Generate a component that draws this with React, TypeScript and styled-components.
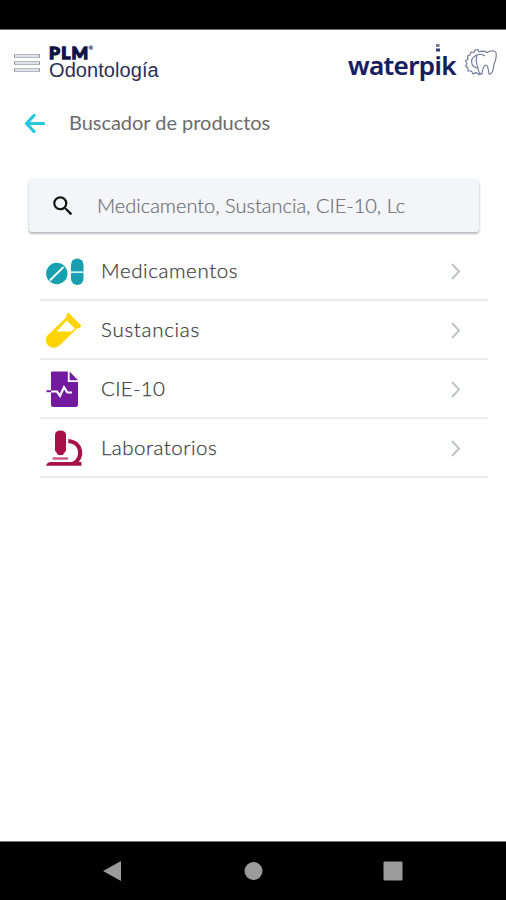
import React from 'react';
import styled, { createGlobalStyle } from 'styled-components';
import { MdSearch } from 'react-icons/md';

const GlobalStyle = createGlobalStyle`
  * { box-sizing: border-box; }
  body { margin: 0; background: #fff; font-family: Lato, "Liberation Sans", sans-serif; }
  svg { display: block; flex: none; }
`;

const Screen = styled.div`
  display: flex;
  flex-direction: column;
  width: 506px;
  height: 900px;
  overflow: hidden;
  background: #fff;
`;

const StatusBar = styled.div`
  height: 30px;
  flex: none;
  background: #000;
  border-bottom: 1px solid #707070;
`;

const Header = styled.header`
  display: flex;
  height: 65px;
  flex: none;
  padding-left: 14px;
`;

const MenuButton = styled.div`
  display: flex;
  flex-direction: column;
  gap: 3px;
  width: 26px;
  padding-top: 24px;
`;

const MenuLine = styled.span`
  height: 4px;
  border: 1px solid #b4b8bf;
  border-left-color: #8b9099;
  border-right-color: #8b9099;
  border-radius: 1px;
  background: #e0e2e7;
`;

const Brand = styled.div`
  display: flex;
  flex-direction: column;
  width: 130px;
  margin-left: 9px;
  padding-top: 15px;
  color: #10134a;
  white-space: nowrap;
`;

const BrandName = styled.div`
  display: flex;
  height: 15px;
  font: 900 17.5px/16px Lato, sans-serif;
  letter-spacing: 1.2px;
  -webkit-text-stroke: 1.3px #10134a;
`;

const Registered = styled.span`
  margin-left: -1px;
  font-size: 6px;
  line-height: 6px;
  -webkit-text-stroke: 0;
`;

const BrandSection = styled.div`
  font: 20px/20px "Liberation Sans", sans-serif;
  letter-spacing: 0.07px;
  color: #2b2e56;
`;

const Sponsor = styled.div`
  display: flex;
  margin-left: 169px;
`;

const SponsorName = styled.div`
  position: relative;
  width: 112px;
  padding-top: 19px;
  font: 600 26px/32px "Noto Sans", sans-serif;
  letter-spacing: -0.6px;
  color: #151c60;
  white-space: nowrap;
  -webkit-text-stroke: 0.2px #151c60;
`;

const WaterDrops = styled.svg`
  position: absolute;
  left: 87px;
  top: 12px;
`;

const ToothMark = styled.svg`
  margin: 17px 0 0 4px;
`;

const TitleBar = styled.div`
  display: flex;
  align-items: center;
  height: 56px;
  flex: none;
  padding-left: 24px;
`;

const Title = styled.h1`
  margin: -2px 0 0 23px;
  font-size: 20px;
  line-height: 26px;
  font-weight: 400;
  letter-spacing: -0.03px;
  color: #6b6b6b;
`;

const SearchField = styled.div`
  display: flex;
  align-items: center;
  width: 450px;
  height: 52px;
  flex: none;
  margin: 29px 0 0 29px;
  padding-left: 21px;
  border-radius: 3px;
  background: #f3f5f9;
  box-shadow: 0 2px 2px #b9bcc0, 0 0 3px #d9dce0;
`;

const Placeholder = styled.span`
  margin: -2px 0 0 21px;
  font-size: 20px;
  line-height: 26px;
  font-weight: 300;
  letter-spacing: 0;
  color: #68696d;
  white-space: nowrap;
  -webkit-text-stroke: 0.2px #77787c;
`;

const List = styled.ul`
  margin: 10px 18px 0 40px;
  padding: 0;
  flex: 1;
  list-style: none;
`;

const Row = styled.li`
  display: flex;
  align-items: center;
  height: 59px;
  padding-left: 4px;
  border-bottom: 2px solid #ececee;
`;

const RowLabel = styled.span<{ $spacing: number }>`
  flex: 1;
  margin: -2px 0 0 17px;
  font-size: 20.5px;
  line-height: 26px;
  font-weight: 300;
  letter-spacing: ${(p) => p.$spacing}px;
  color: #404040;
  -webkit-text-stroke: 0.25px #404040;
`;

const Chevron = styled.svg`
  margin-right: 26px;
`;

const NavBar = styled.nav`
  display: flex;
  align-items: center;
  justify-content: space-between;
  height: 59px;
  flex: none;
  padding: 0 103px 0 102px;
  background: #000;
  border-top: 1px solid #777;
`;

const PillsIcon = () => (
  <svg width="40" height="40" viewBox="0 0 40 40">
    <circle cx="12.8" cy="22.5" r="10.7" fill="#199faf" />
    <path d="M5.8 29.5L19.5 16" stroke="#fff" strokeWidth="1.8" />
    <rect x="27" y="7.5" width="12.5" height="26.5" rx="6.25" fill="#199faf" />
    <path d="M27 21.2h12.5" stroke="#c9f1f3" strokeWidth="1.8" />
  </svg>
);

const TubeIcon = () => (
  <svg width="40" height="40" viewBox="0 0 40 40">
    <path d="M22.3 4.6L24.5 2.7L37.4 15.5L35.4 18.5L33.3 18.3L15.8 35.3C8 42 -2.5 33.5 3.7 25.2L22.5 7.2Z" fill="#fed500" />
    <path d="M22.7 10.4L31 18.4L27.3 21.5H12.6Z" fill="#fff" />
  </svg>
);

const RecordIcon = () => (
  <svg width="40" height="40" viewBox="0 0 40 40">
    <path d="M8 2.5H23.8V13H34V35.5Q34 38 31.5 38H9.5Q7 38 7 35.5V3.5Q7 2.5 8 2.5Z" fill="#741a9f" />
    <path d="M25.6 2.5L34 11.3H25.6Z" fill="#741a9f" />
    <path d="M7 22.5H13L16 26.8L20 18.2L23.4 23.5H28" fill="none" stroke="#fff" strokeWidth="2.2" />
    <path d="M2.5 22.2H7" stroke="#741a9f" strokeWidth="2" />
  </svg>
);

const MicroscopeIcon = () => (
  <svg width="40" height="40" viewBox="0 0 40 40">
    <path d="M11 7Q11 2.5 16.5 2.5Q22 2.5 22 7V22.5L18.8 27H14.2L11 22.5Z" fill="#aa1048" />
    <path d="M24.3 13C38 14 40 30 29.5 35.5" fill="none" stroke="#aa1048" strokeWidth="4.2" />
    <path d="M8.5 30.5H24" stroke="#c45a80" strokeWidth="2.4" />
    <path d="M2 37.8Q3 34 7 34H37.5V37.8Z" fill="#aa1048" />
  </svg>
);

const rows = [
  { label: 'Medicamentos', icon: <PillsIcon />, spacing: 0.6 },
  { label: 'Sustancias', icon: <TubeIcon />, spacing: 0.7 },
  { label: 'CIE-10', icon: <RecordIcon />, spacing: 0.3 },
  { label: 'Laboratorios', icon: <MicroscopeIcon />, spacing: 0.5 },
];

export default function App() {
  return (
    <Screen>
      <GlobalStyle />
      <StatusBar />
      <Header>
        <MenuButton><MenuLine /><MenuLine /><MenuLine /></MenuButton>
        <Brand>
          <BrandName>PLM<Registered>®</Registered></BrandName>
          <BrandSection>Odontología</BrandSection>
        </Brand>
        <Sponsor>
          <SponsorName>
            waterpik
            <WaterDrops width="6" height="14" viewBox="0 0 6 14">
              <rect x="1" y="2" width="3.5" height="3" fill="#70759f" />
              <rect x="1" y="6.5" width="4" height="3" fill="#343b79" />
            </WaterDrops>
          </SponsorName>
          <ToothMark width="34" height="32" viewBox="0 0 34 32" fill="none" stroke="#6d739a" strokeWidth="1.1">
            <path d="M15 5Q19 3 23 5.5Q29 2 32 5.5Q33 11 30 17Q29 28 25 27Q24 18 22 18Q19 18 18 27Q15 28 14 21Q11 14 13 8" />
            <path d="M15 5L14 2.5L11 3L10 5.5L7 5L6 8L3.5 9L4 12L1.5 14L3 16.5L1.5 19L4 21L4 24L7.5 24L9 27L12 25.5L15 27.5L17 26" />
            <path d="M21 9Q17 6 13 8Q6 11 8 17Q10 21 14 21" />
          </ToothMark>
        </Sponsor>
      </Header>
      <TitleBar>
        <svg width="22" height="20" viewBox="0 0 22 20" fill="none" stroke="#26c7dc" strokeWidth="3.2" strokeLinecap="round" strokeLinejoin="round">
          <path d="M10 2.5L2.5 10.5L10 18.5M3 10.5H19.5" />
        </svg>
        <Title>Buscador de productos</Title>
      </TitleBar>
      <SearchField>
        <MdSearch size={26} color="#111" />
        <Placeholder>Medicamento, Sustancia, CIE-10, Lc</Placeholder>
      </SearchField>
      <List>
        {rows.map((row) => (
          <Row key={row.label}>
            {row.icon}
            <RowLabel $spacing={row.spacing}>{row.label}</RowLabel>
            <Chevron width="12" height="18" viewBox="0 0 12 18" fill="none" stroke="#bfc2c6" strokeWidth="2">
              <path d="M2 2L9 9.5L2 17" />
            </Chevron>
          </Row>
        ))}
      </List>
      <NavBar>
        <svg width="20" height="22" viewBox="0 0 20 22"><path d="M1 11L19 1V21Z" fill="#9b9b9b" /></svg>
        <svg width="20" height="20" viewBox="0 0 20 20"><circle cx="10.5" cy="10" r="9" fill="#9b9b9b" /></svg>
        <svg width="20" height="20" viewBox="0 0 20 20"><rect x="0.5" y="0.5" width="19" height="19" rx="1" fill="#9b9b9b" /></svg>
      </NavBar>
    </Screen>
  );
}
